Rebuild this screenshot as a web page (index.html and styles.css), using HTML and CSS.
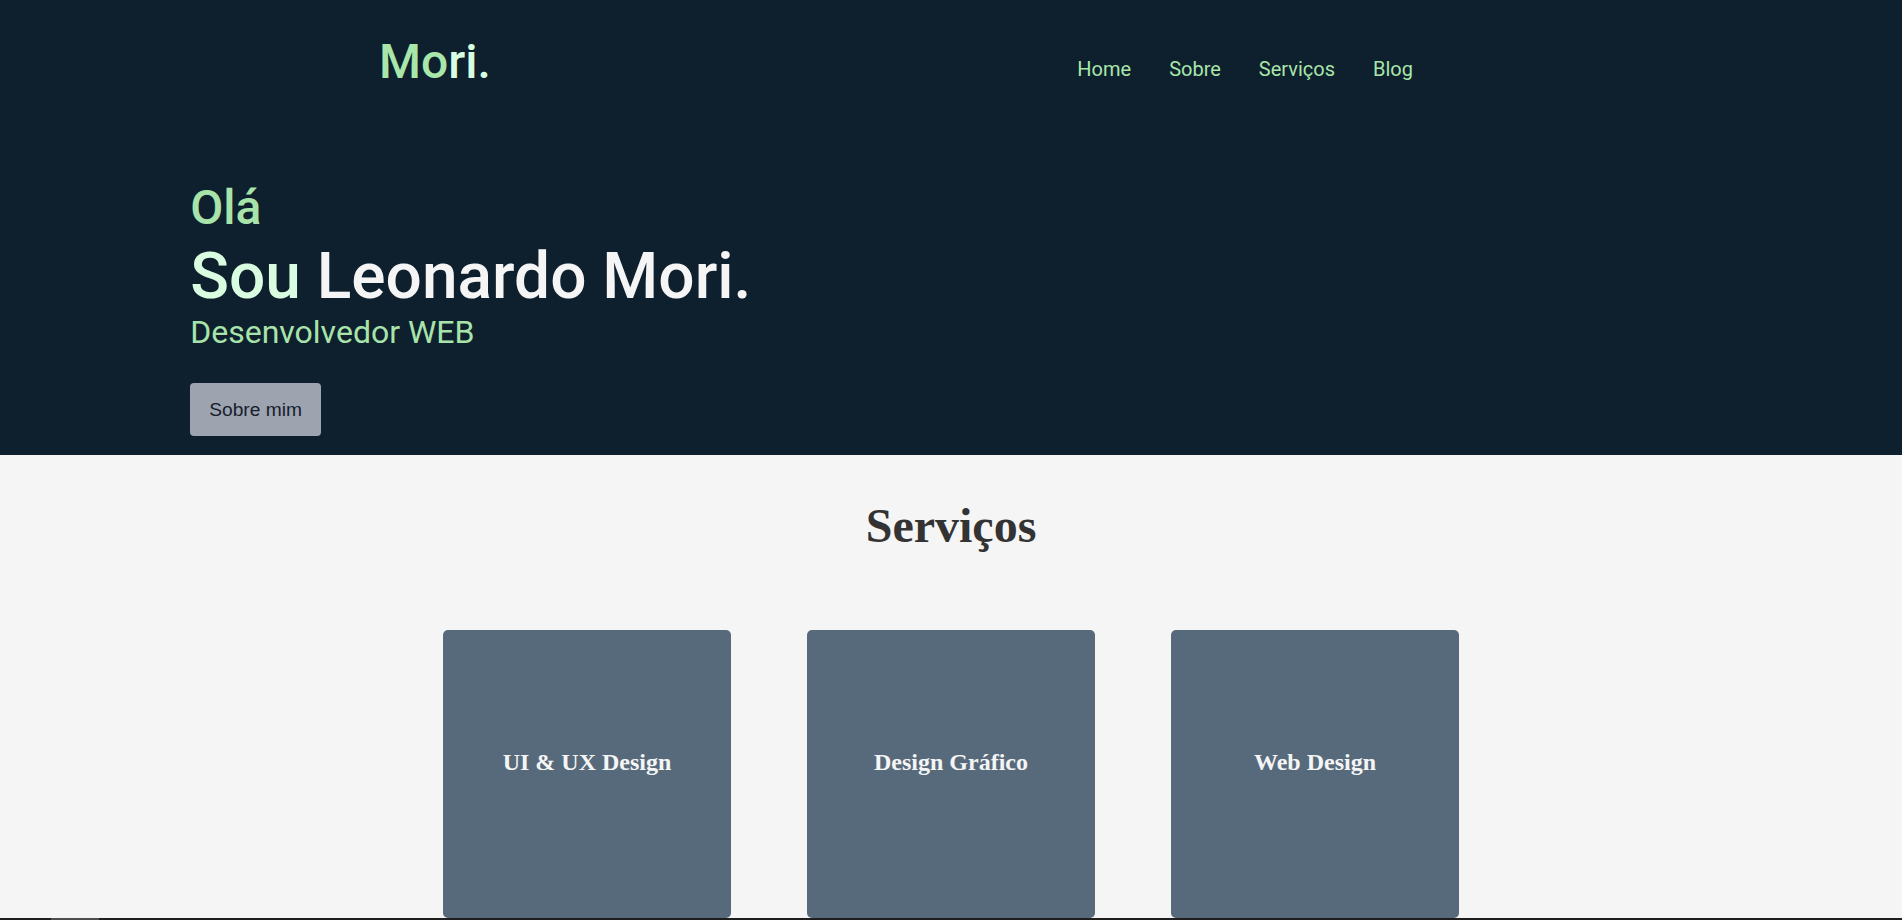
FILE: index.html
```html
<!DOCTYPE html>
<html lang="pt-BR">
<head>
<meta charset="utf-8">
<title>Mori.</title>
<link rel="stylesheet" href="styles.css">
</head>
<body>
<div class="top">
  <header class="header">
    <a class="logo" href="#"><span class="logo-a">Mo</span><span class="logo-b">ri.</span></a>
    <nav class="nav">
      <a href="#">Home</a>
      <a href="#">Sobre</a>
      <a href="#">Serviços</a>
      <a href="#">Blog</a>
    </nav>
  </header>
  <section class="hero">
    <p class="hello">Olá</p>
    <h1 class="name"><span class="sou">Sou</span> Leonardo Mori.</h1>
    <p class="role">Desenvolvedor WEB</p>
    <a class="btn" href="#">Sobre mim</a>
  </section>
</div>
<section class="services">
  <h2 class="services-title">Serviços</h2>
  <div class="cards">
    <div class="card"><h3>UI &amp; UX Design</h3></div>
    <div class="card"><h3>Design Gráfico</h3></div>
    <div class="card"><h3>Web Design</h3></div>
  </div>
</section>
<div class="hbar"><div class="hbar-thumb"></div></div>
</body>
</html>
```
FILE: styles.css
```css
* { box-sizing: border-box; }
html, body { margin: 0; padding: 0; }
body {
  font-family: Roboto, "Liberation Sans", Arial, sans-serif;
  background: #f5f5f5;
  overflow: hidden;
  height: 920px;
}
a { text-decoration: none; }

.top {
  background: #0e1f2e;
  padding-bottom: 19px;
}

.header {
  display: flex;
  justify-content: space-between;
  align-items: flex-start;
  padding: 33px 489px 0 379px;
}
.logo {
  font-size: 48px;
  font-weight: 500;
  line-height: normal;
}
.logo-a { color: #a8e6aa; }
.logo-b { color: #d9fde0; }

.nav {
  display: flex;
  gap: 38px;
  margin-top: 24px;
}
.nav a {
  color: #a8e6aa;
  font-size: 20px;
  font-weight: 400;
  line-height: normal;
}

.hero {
  padding: 0 10%;
  margin-top: 89px;
}
.hello {
  margin: 0;
  font-size: 48px;
  font-weight: 500;
  line-height: normal;
  color: #a8e4aa;
}
.name {
  margin: 3px 0 0;
  font-size: 64px;
  font-weight: 500;
  line-height: normal;
  color: #f5f5f5;
}
.sou { color: #d9fde0; }
.role {
  margin: -1px 0 0;
  font-size: 32px;
  font-weight: 400;
  line-height: normal;
  color: #a8e4aa;
}
.btn {
  display: inline-block;
  margin-top: 32px;
  padding: 16px 19px;
  font-family: "Liberation Sans", Arial, sans-serif;
  font-size: 19.2px;
  line-height: 21px;
  color: #16202e;
  background: #9ea3b0;
  border-radius: 4px;
}

.services {
  padding-top: 44px;
}
.services-title {
  margin: 0;
  text-align: center;
  font-family: "Liberation Serif", "Times New Roman", serif;
  font-size: 48px;
  font-weight: 700;
  line-height: 53px;
  color: #333333;
}
.cards {
  display: flex;
  justify-content: center;
  gap: 76px;
  margin-top: 78px;
}
.card {
  width: 288px;
  height: 288px;
  background: #566a7c;
  border-radius: 5px;
  display: flex;
  align-items: center;
  justify-content: center;
  padding-bottom: 24px;
}
.card h3 {
  margin: 0;
  font-family: "Liberation Serif", "Times New Roman", serif;
  font-size: 24px;
  font-weight: 700;
  color: #f5f5f5;
}

.hbar {
  position: fixed;
  left: 0;
  right: 0;
  bottom: 0;
  height: 2px;
  background: #1e1e1e;
}
.hbar-thumb {
  margin-left: 51px;
  width: 48px;
  height: 2px;
  background: #4d4d4d;
}
```
